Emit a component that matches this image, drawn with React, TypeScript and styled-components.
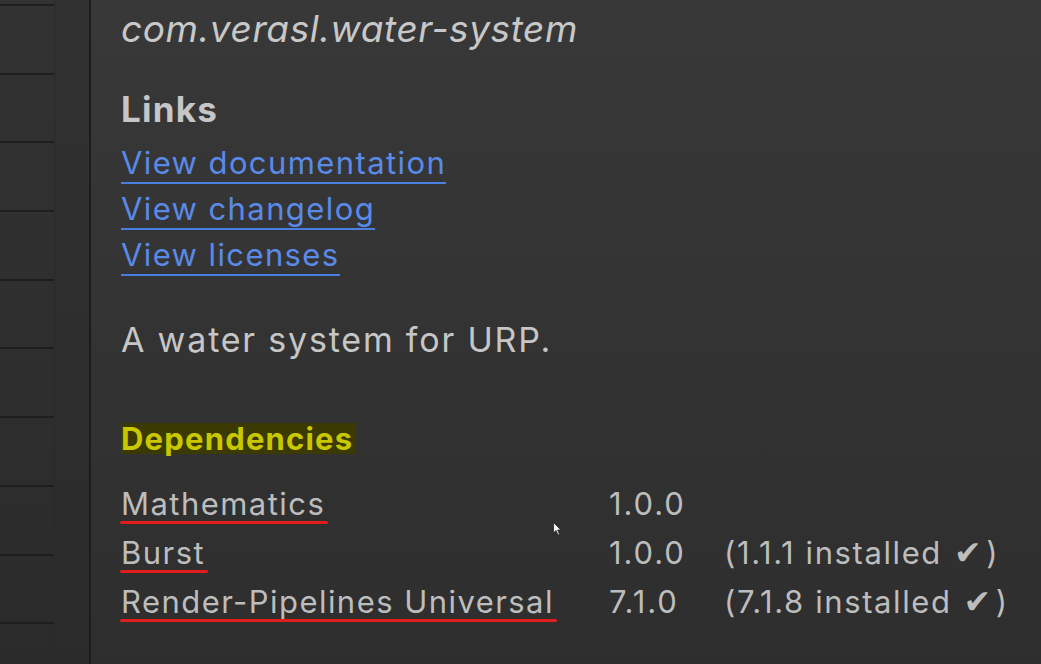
import { Fragment } from 'react';
import styled, { createGlobalStyle } from 'styled-components';

const GlobalStyle = createGlobalStyle`
  html, body {
    margin: 0;
    padding: 0;
    background: #333333;
  }
  body {
    font-family: Inter, "Noto Sans", sans-serif;
    overflow: hidden;
  }
`;

const Page = styled.div`
  display: flex;
  width: 1041px;
  height: 664px;
  overflow: hidden;
`;

const PackageList = styled.div`
  width: 54px;
  display: flex;
  flex-direction: column;
  background: linear-gradient(#323232, #2b2b2b);
  border-right: 1px solid #292929;
`;

const ListRow = styled.div<{ $partial?: boolean }>`
  height: ${(p) => (p.$partial ? '4px' : '66.7px')};
  flex-shrink: 0;
  border-bottom: 2px solid #1e1e1e;
`;

const Gutter = styled.div`
  width: 34px;
  background: linear-gradient(#313131, #2b2b2b);
  border-right: 2px solid #1c1c1c;
`;

const Details = styled.main`
  flex: 1;
  position: relative;
  padding: 5px 0 0 30px;
  background: linear-gradient(#383838, #2e2e2e);
  color: #c4c4c4;
`;

const PackageId = styled.div`
  font-size: 37px;
  font-style: italic;
  line-height: 48px;
  color: #c8c8c8;
  letter-spacing: 0.6px;
`;

const SectionTitle = styled.div<{ $highlight?: boolean }>`
  display: flex;
  align-items: flex-start;
  span {
    font-weight: 700;
    font-size: ${(p) => (p.$highlight ? '31px' : '35px')};
    line-height: ${(p) => (p.$highlight ? '31px' : '40px')};
    letter-spacing: 1.2px;
    padding-right: ${(p) => (p.$highlight ? '3px' : '0')};
    color: ${(p) => (p.$highlight ? '#c9c800' : '#c6c6c6')};
    background: ${(p) => (p.$highlight ? '#3b3a02' : 'transparent')};
  }
`;

const LinkList = styled.div`
  display: flex;
  flex-direction: column;
  align-items: flex-start;
  margin-top: 15px;
`;

const DocLink = styled.a`
  font-size: 31px;
  line-height: 38px;
  margin-bottom: 6px;
  color: #5a8ae8;
  text-decoration: none;
  letter-spacing: 1.4px;
  border-bottom: 2px solid #4a7ee0;
  cursor: pointer;
`;

const Description = styled.p`
  margin: 38px 0 0;
  font-size: 34px;
  line-height: 40px;
  color: #c6c6c6;
  letter-spacing: 1.8px;
`;

const DepTable = styled.div`
  display: grid;
  grid-template-columns: 488px 115px auto;
  row-gap: 9px;
  margin-top: 30px;
  font-size: 31px;
  line-height: 40px;
  color: #bdbdbd;
  letter-spacing: 1.45px;
`;

const DepName = styled.span`
  justify-self: start;
  position: relative;
  &::after {
    content: '';
    position: absolute;
    left: -1px;
    right: -3px;
    bottom: 0;
    height: 3px;
    border-radius: 2px;
    background: #e31c1c;
  }
`;

const Version = styled.span`
  letter-spacing: 1.9px;
`;

const Installed = styled.span`
  letter-spacing: 1.6px;
`;

const Check = styled.span`
  font-family: "DejaVu Sans", sans-serif;
  font-size: 33px;
  margin: 0 3px 0 12px;
`;

const Cursor = styled.svg`
  position: absolute;
  left: 462px;
  top: 522px;
`;

const links = ['View documentation', 'View changelog', 'View licenses'];

const deps = [
  { name: 'Mathematics', version: '1.0.0', installed: '' },
  { name: 'Burst', version: '1.0.0', installed: '1.1.1' },
  { name: 'Render-Pipelines Universal', version: '7.1.0', installed: '7.1.8' },
];

export default function App() {
  return (
    <Page>
      <GlobalStyle />
      <PackageList>
        <ListRow $partial />
        {Array.from({ length: 10 }).map((_, i) => (
          <ListRow key={i} />
        ))}
      </PackageList>
      <Gutter />
      <Details>
        <PackageId>com.verasl.water-system</PackageId>
        <SectionTitle style={{ marginTop: 36 }}>
          <span>Links</span>
        </SectionTitle>
        <LinkList>
          {links.map((l) => (
            <DocLink key={l}>{l}</DocLink>
          ))}
        </LinkList>
        <Description>A water system for URP.</Description>
        <SectionTitle $highlight style={{ marginTop: 63 }}>
          <span>Dependencies</span>
        </SectionTitle>
        <DepTable>
          {deps.map((d) => (
            <Fragment key={d.name}>
              <DepName>{d.name}</DepName>
              <Version>{d.version}</Version>
              <Installed>
                {d.installed && (
                  <>
                    ({d.installed} installed<Check>✔</Check>)
                  </>
                )}
              </Installed>
            </Fragment>
          ))}
        </DepTable>
        <Cursor width="9" height="14" viewBox="0 0 9 14">
          <path d="M0.5 0.5 L0.5 11 L3 8.6 L5 13 L6.6 12.3 L4.7 8 L8 8 Z" fill="#f2f2f2" stroke="#222" strokeWidth="0.8" />
        </Cursor>
      </Details>
    </Page>
  );
}
